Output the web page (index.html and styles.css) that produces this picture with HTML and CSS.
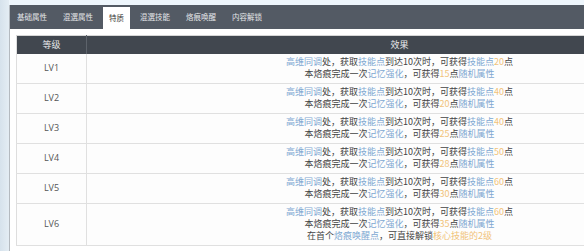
FILE: index.html
```html
<!DOCTYPE html>
<html lang="zh-CN">
<head>
<meta charset="utf-8">
<link rel="stylesheet" href="styles.css">
</head>
<body>
<div class="panel">
  <div class="tabs">
    <div class="tab">基础属性</div>
    <div class="tab">混選属性</div>
    <div class="tab active">特质</div>
    <div class="tab">混選技能</div>
    <div class="tab">烙痕唤醒</div>
    <div class="tab">内容解锁</div>
  </div>
  <div class="body">
    <table class="grid">
      <thead>
        <tr><th class="lv">等级</th><th>效果</th></tr>
      </thead>
      <tbody>
        <tr><td class="lv">LV1</td><td><span class="b">高维同调</span>处，获取<span class="b">技能点</span>到达10次时，可获得<span class="b">技能点</span><span class="o">20</span>点<br>本烙痕完成一次<span class="b">记忆强化</span>，可获得<span class="o">15</span>点<span class="b">随机属性</span></td></tr>
        <tr><td class="lv">LV2</td><td><span class="b">高维同调</span>处，获取<span class="b">技能点</span>到达10次时，可获得<span class="b">技能点</span><span class="o">40</span>点<br>本烙痕完成一次<span class="b">记忆强化</span>，可获得<span class="o">20</span>点<span class="b">随机属性</span></td></tr>
        <tr><td class="lv">LV3</td><td><span class="b">高维同调</span>处，获取<span class="b">技能点</span>到达10次时，可获得<span class="b">技能点</span><span class="o">40</span>点<br>本烙痕完成一次<span class="b">记忆强化</span>，可获得<span class="o">25</span>点<span class="b">随机属性</span></td></tr>
        <tr><td class="lv">LV4</td><td><span class="b">高维同调</span>处，获取<span class="b">技能点</span>到达10次时，可获得<span class="b">技能点</span><span class="o">50</span>点<br>本烙痕完成一次<span class="b">记忆强化</span>，可获得<span class="o">28</span>点<span class="b">随机属性</span></td></tr>
        <tr><td class="lv">LV5</td><td><span class="b">高维同调</span>处，获取<span class="b">技能点</span>到达10次时，可获得<span class="b">技能点</span><span class="o">60</span>点<br>本烙痕完成一次<span class="b">记忆强化</span>，可获得<span class="o">30</span>点<span class="b">随机属性</span></td></tr>
        <tr><td class="lv">LV6</td><td><span class="b">高维同调</span>处，获取<span class="b">技能点</span>到达10次时，可获得<span class="b">技能点</span><span class="o">60</span>点<br>本烙痕完成一次<span class="b">记忆强化</span>，可获得<span class="o">35</span>点<span class="b">随机属性</span><br>在首个<span class="b">烙痕唤醒点</span>，可直接解锁<span class="o">核心技能的2级</span></td></tr>
      </tbody>
    </table>
  </div>
</div>
</body>
</html>
```

FILE: styles.css
```css
html, body {
  margin: 0;
  padding: 0;
  height: 251px;
  overflow: hidden;
}
body {
  background: linear-gradient(to right, #d6e2ec 0, #e4edf4 9px, #eef6fc 9px);
  font-family: "Noto Sans CJK SC", "Noto Sans", sans-serif;
  padding: 5px 0 0 9px;
}
.panel {
  width: 720px;
  background: #fff;
  border-left: 1px solid #b4bac0;
  border-bottom: 2px solid #a8acb0;
}
.tabs {
  display: flex;
  align-items: flex-end;
  height: 24px;
  background: #535a64;
  padding-left: 0;
}
.tab {
  height: 24px;
  line-height: 24px;
  margin: 0 2px;
  padding: 0 6px;
  font-size: 7.5px;
  color: #e4e6e9;
  white-space: nowrap;
}
.tab:first-child {
  margin-left: 1px;
}
.tab.active {
  height: 22px;
  line-height: 21px;
  background: #fff;
  color: #333;
}
.body {
  padding: 6px 0 6px 6px;
}
.grid {
  width: 696px;
  border-collapse: collapse;
  border-left: 1px solid #dedede;
  border-top: 1px solid #d6d6d6;
}
.grid th {
  height: 18px;
  padding: 0;
  background: #41474f;
  color: #e9eaec;
  font-size: 9px;
  font-weight: normal;
  line-height: 18px;
}
.grid th.lv {
  width: 69px;
  border-right: 1px solid #5d636b;
}
.grid td {
  padding: 2px 0 3px;
  border-bottom: 1px solid #e0e0e0;
  text-align: center;
  font-size: 9px;
  line-height: 12px;
  color: #444;
  background: #fdfdfd;
}
.grid td.lv {
  border-right: 1px solid #e0e0e0;
  color: #555;
  font-family: "Open Sans", "Noto Sans", sans-serif;
  font-size: 9px;
}
.b {
  color: #7ea8d2;
}
.o {
  color: #f1c37a;
}
```
